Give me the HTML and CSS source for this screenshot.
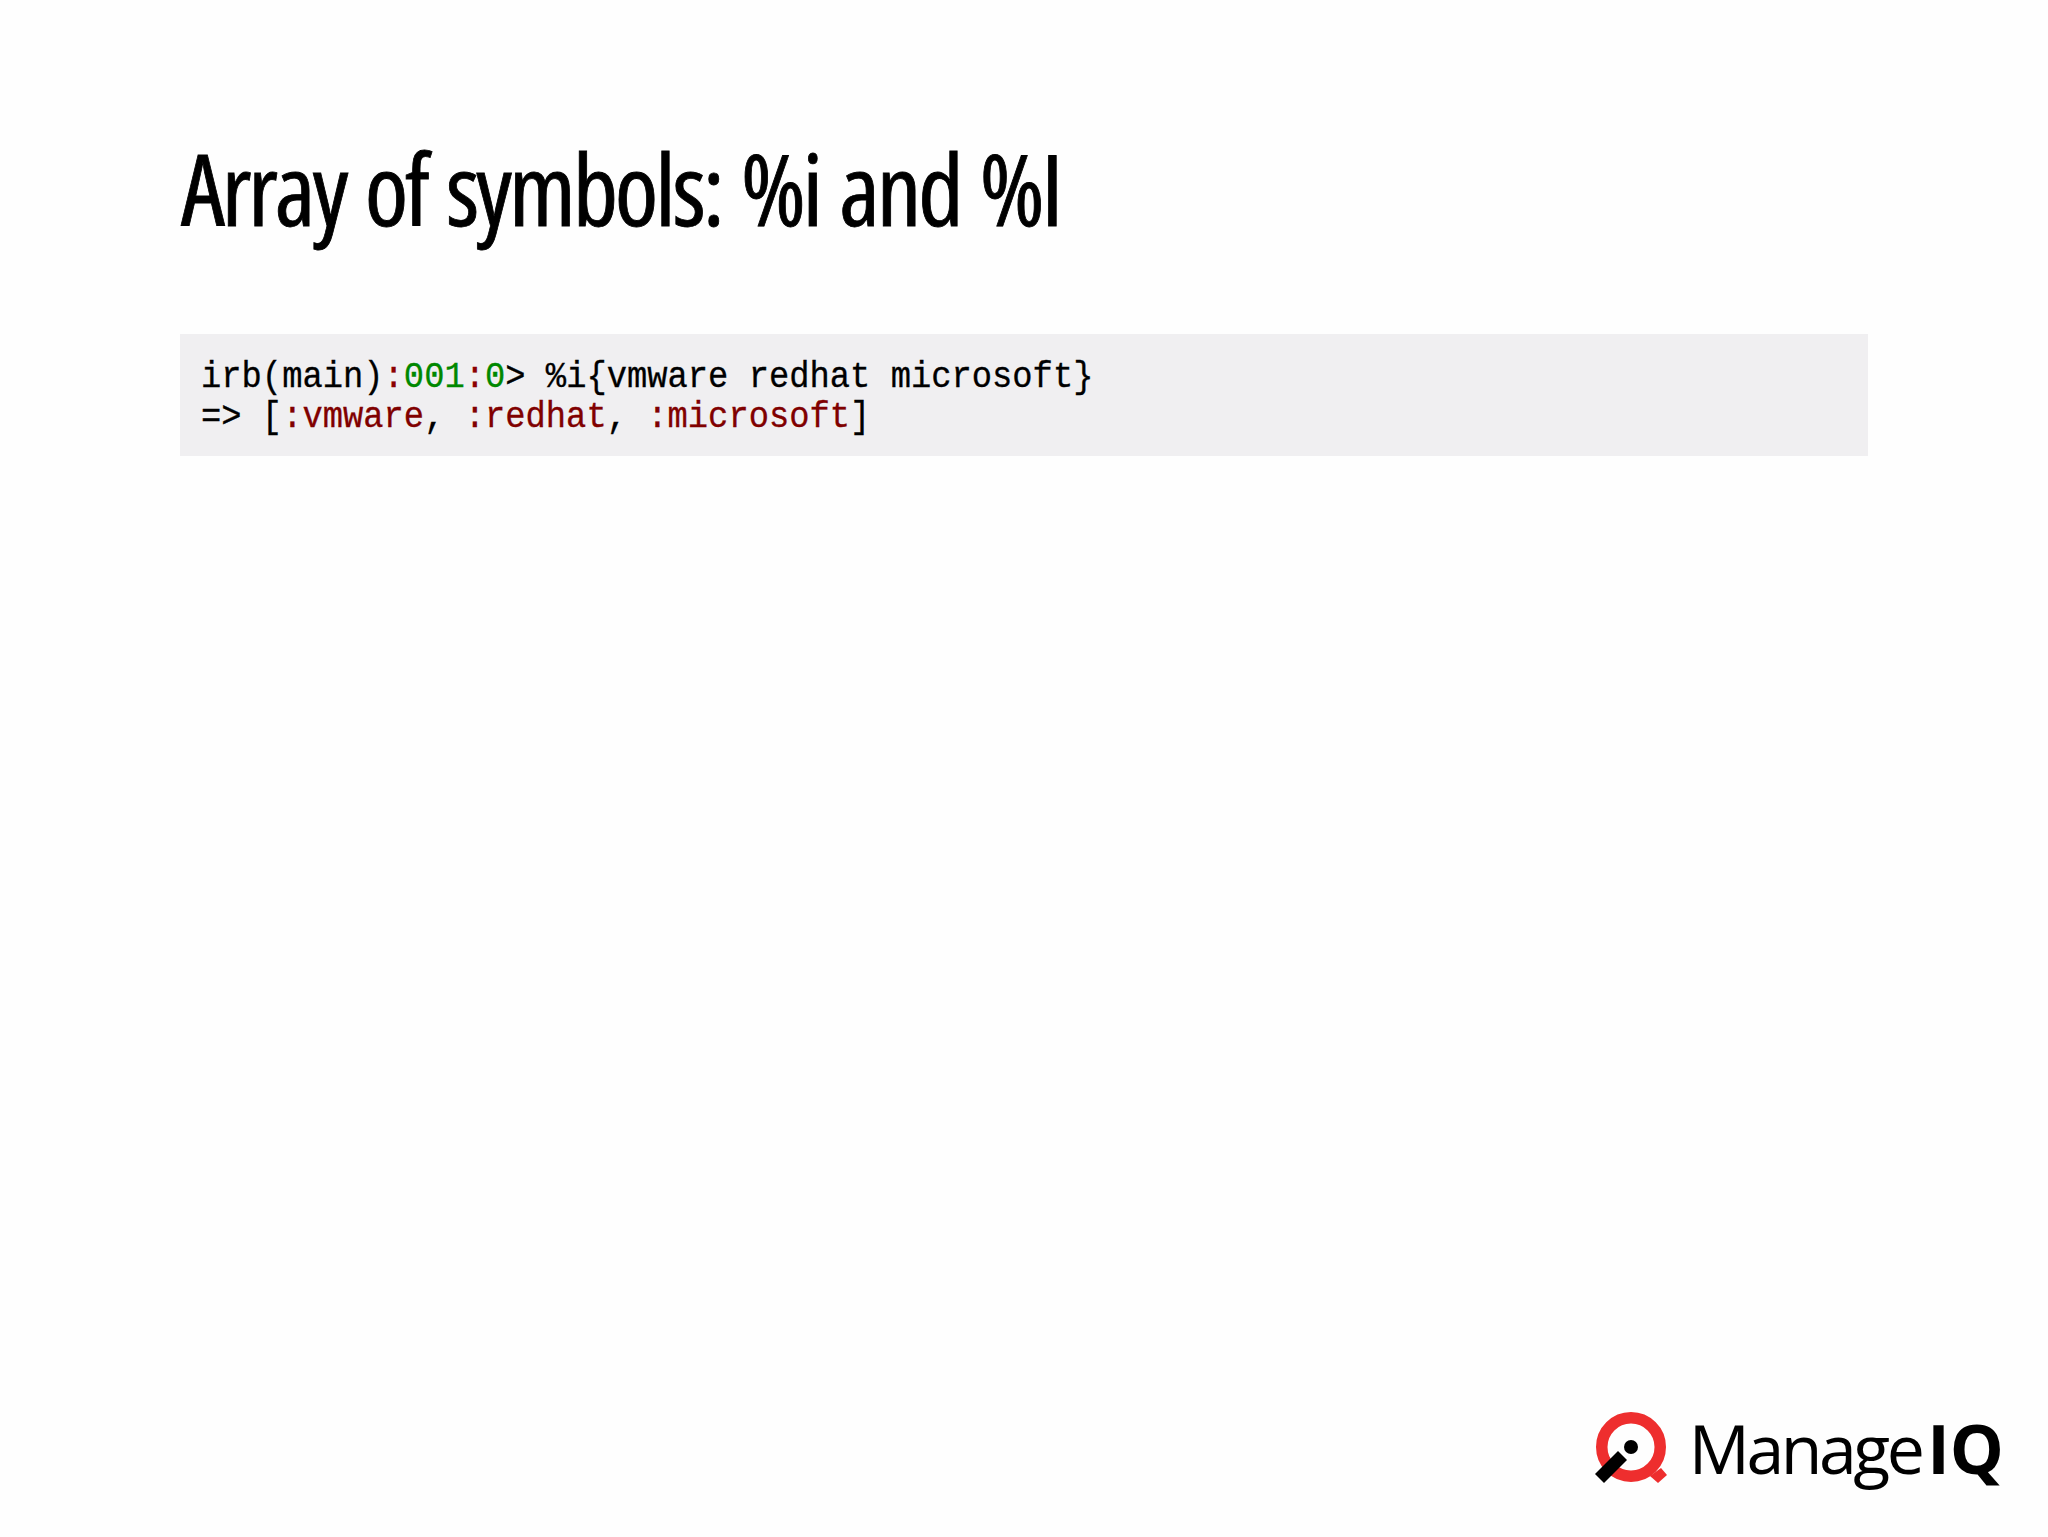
FILE: index.html
```html
<!DOCTYPE html>
<html lang="en">
<head>
<meta charset="utf-8">
<title>Array of symbols</title>
<link rel="stylesheet" href="styles.css">
</head>
<body>
<main class="slide">
  <h1 class="title">Array of symbols: %i and %I</h1>
  <pre class="code"><code class="code-text">irb(main)<span class="red">:</span><span class="green">001</span><span class="red">:</span><span class="green">0</span>&gt; %i{vmware redhat microsoft}
=&gt; [<span class="dark">:vmware</span>, <span class="dark">:redhat</span>, <span class="dark">:microsoft</span>]</code></pre>
  <footer class="footer">
    <div class="logo">
      <svg class="mark" width="80" height="80" viewBox="0 0 80 80" aria-hidden="true">
        <path d="M71 60 L77 67 L68 75 L60 68 Z" fill="#ee2e2e"/>
        <circle cx="41" cy="39" r="29.25" fill="none" stroke="#ee2e2e" stroke-width="11.5"/>
        <circle cx="41" cy="39" r="7" fill="#000"/>
        <path d="M28 43 L37 52 L14 75 L5 66 Z" fill="#000"/>
      </svg>
      <span class="brand">Manage<b class="iq">IQ</b></span>
    </div>
  </footer>
</main>
</body>
</html>
```
FILE: styles.css
```css
* { box-sizing: border-box; }
html, body { margin: 0; padding: 0; background: #fefefe; }
.slide {
  width: 2048px;
  height: 1537px;
  display: flex;
  flex-direction: column;
  padding: 132px 0 0 181px;
  overflow: hidden;
}
.title {
  margin: 0;
  font: 500 99px/112px "Open Sans", sans-serif;
  font-stretch: 75%;
  color: #000;
  white-space: nowrap;
  letter-spacing: -3.1px;
  word-spacing: 4px;
  -webkit-text-stroke: 0.8px #000;
}
.code {
  margin: 90px 0 0 -1px;
  width: 1688px;
  height: 122px;
  padding: 23px 0 0 21px;
  background: #f0eff1;
  font: 400 33.8px/37.3px "Liberation Mono", monospace;
  color: #000;
  -webkit-text-stroke: 0.3px currentColor;
}
.code-text {
  display: block;
  font: inherit;
  transform: scaleY(1.1);
  transform-origin: 0 0;
}
.red { color: #8b0000; }
.dark { color: #800000; }
.green { color: #008800; }
.footer {
  margin-top: auto;
  display: flex;
  justify-content: flex-end;
  padding: 0 44px 49px 0;
}
.logo { display: flex; align-items: center; gap: 19px; }
.mark { display: block; }
.brand {
  font: 500 68px/80px "Open Sans", sans-serif;
  color: #000;
  letter-spacing: -3.5px;
}
.iq { font-weight: 700; margin-left: 6px; letter-spacing: 0; }
```
